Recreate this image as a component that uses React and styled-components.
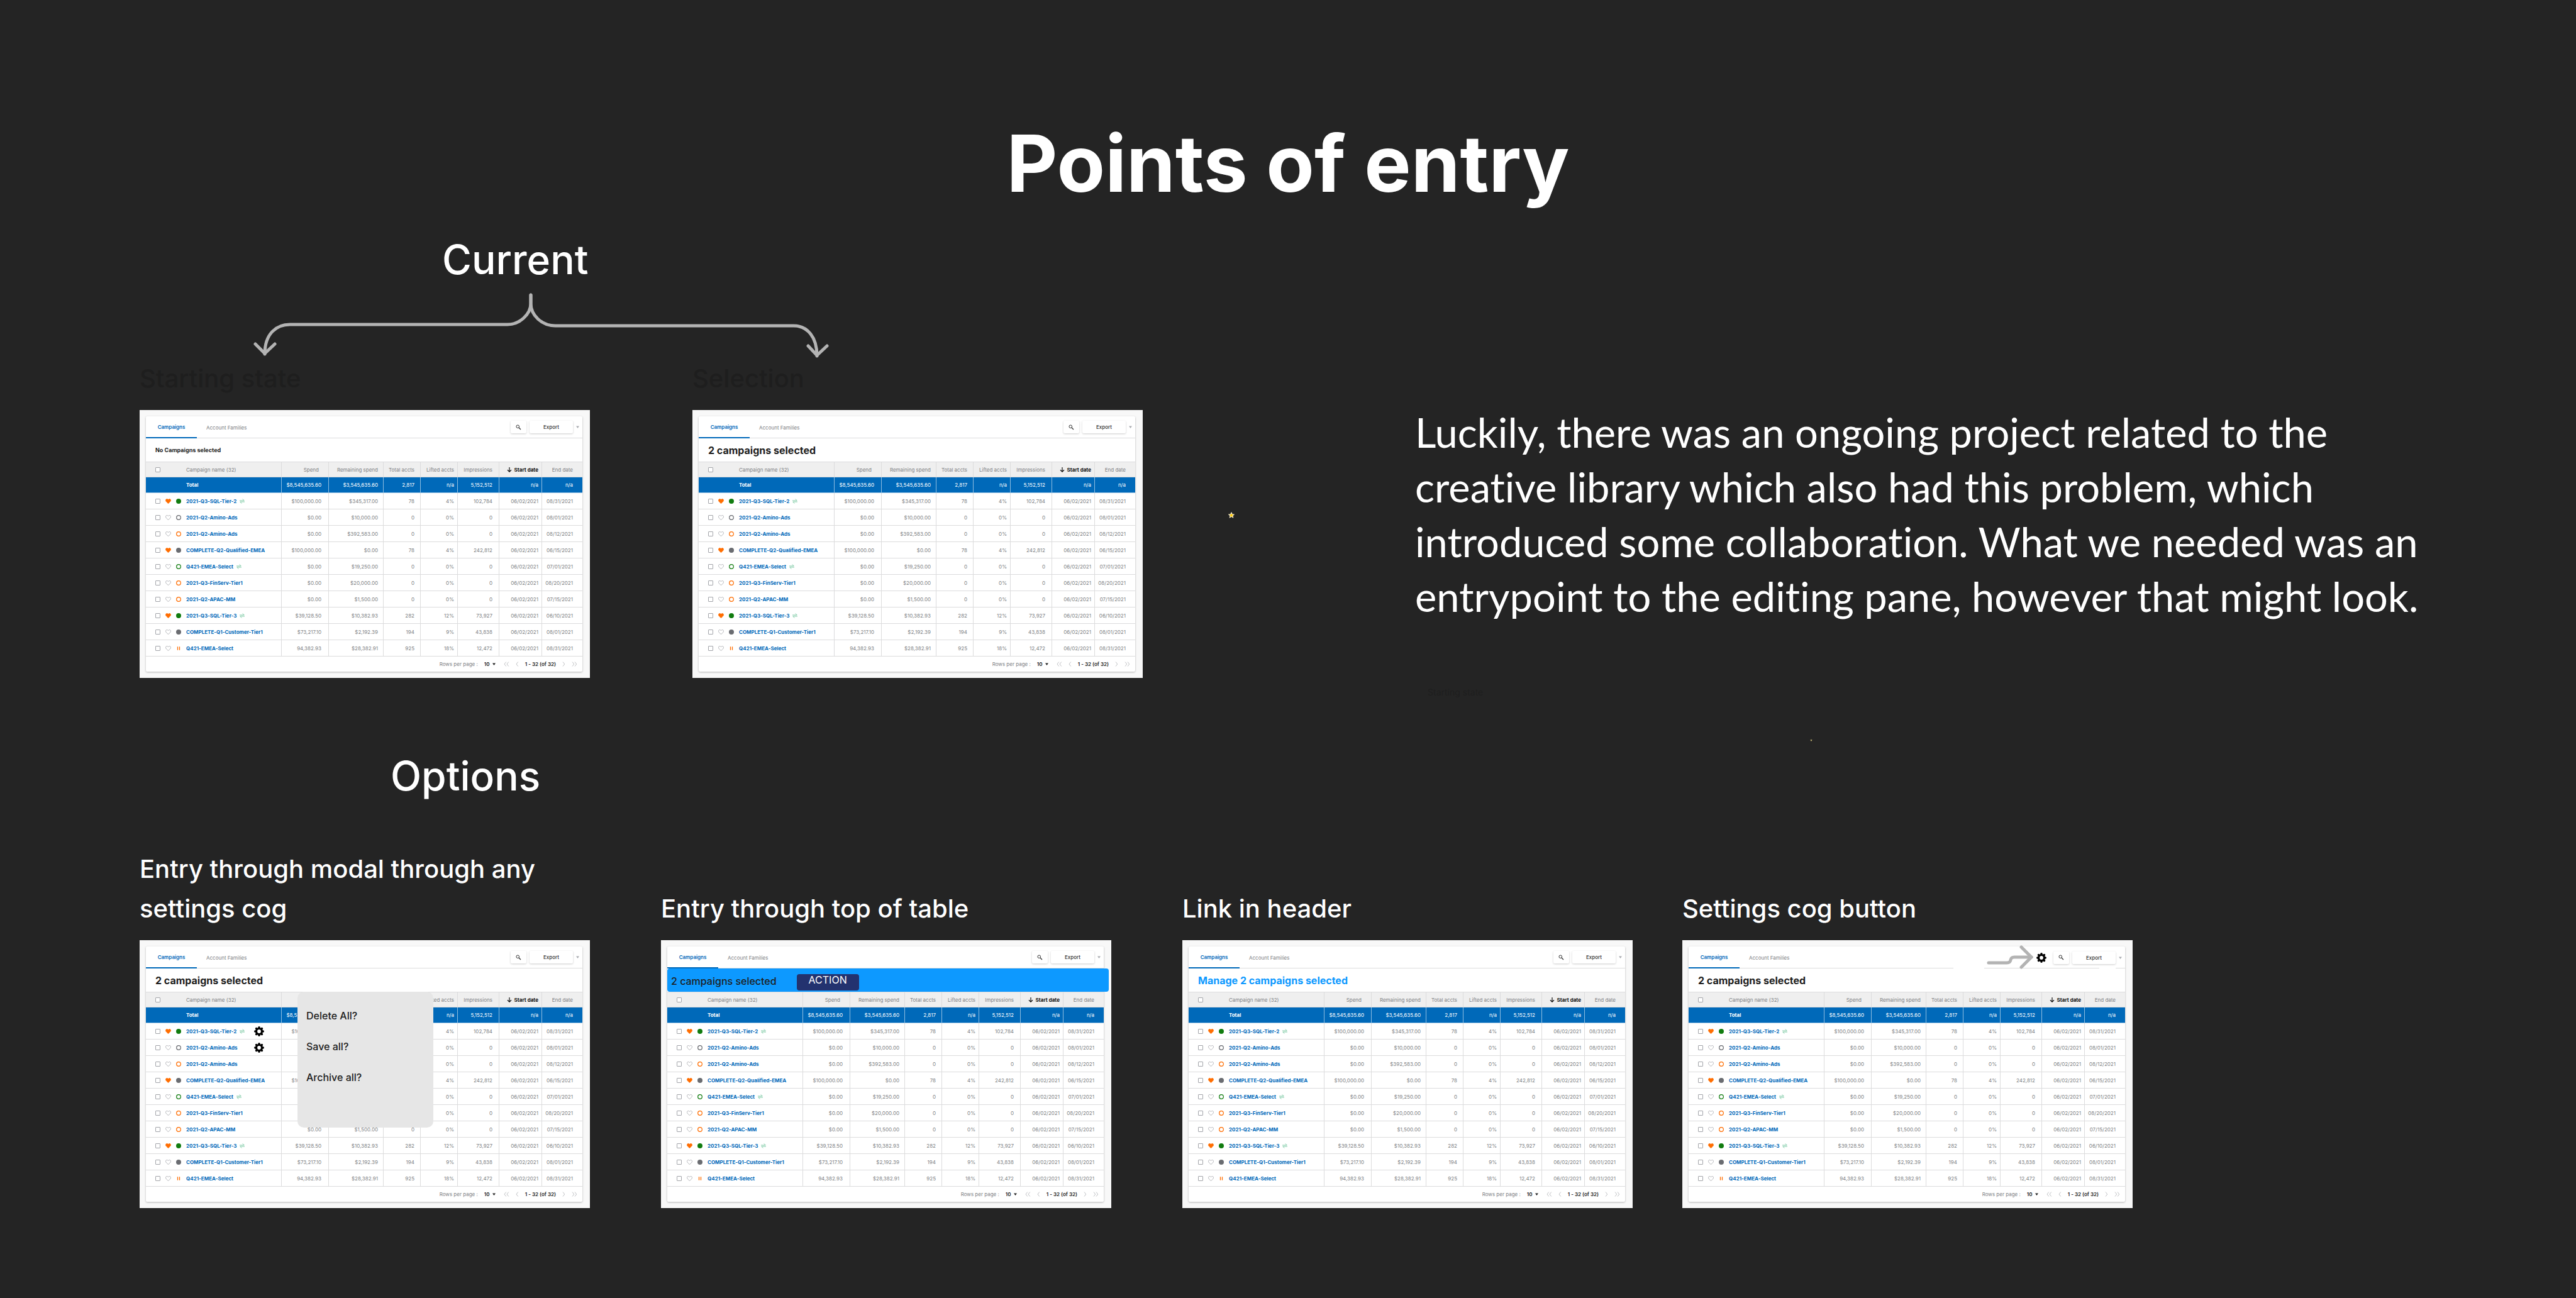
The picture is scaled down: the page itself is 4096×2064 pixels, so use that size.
import React, { useId } from 'react';
import styled, { createGlobalStyle, css } from 'styled-components';

const color = {
  page: '#242424',
  ghost: '#1e1e1e',
  blue: '#0069b9',
  bright: '#0d99ff',
  navy: '#23326f',
  orange: '#ff6d00',
  green: '#117c0f',
  slate: '#6a6c71',
  text: '#808285',
  line: '#dcdcdd',
};

const GlobalStyle = createGlobalStyle`
  * { box-sizing: border-box; }
  html { background: ${color.page}; }
  body { margin: 0; font-family: Inter, "Liberation Sans", sans-serif; }
  h1, h2, h3, p, ul { margin: 0; padding: 0; }
  button, select, input { margin: 0; font-family: inherit; }
  svg { display: block; flex: none; }
`;

/* ---------- board ---------- */

const Page = styled.main`
  display: flex;
  flex-direction: column;
  min-height: 100vh;
  padding: 185px 0 140px 222px;
  background: ${color.page};
  color: #fff;
`;

const Title = styled.h1`
  margin-right: 222px;
  font-size: 125px;
  line-height: 150px;
  font-weight: 700;
  text-align: center;
`;

const Heading = styled.h2`
  padding-left: ${(p) => p.$indent}px;
  font-size: 64px;
  line-height: 78px;
  font-weight: 500;
`;

const CurrentSection = styled.section`
  display: grid;
  grid-template-columns: 1595fr 431fr 1848fr;
  margin-top: 39px;
`;

const CurrentPair = styled.div`
  display: grid;
  grid-template-columns: 879fr 716fr;
`;

const Connector = styled.svg`
  width: 100%;
  height: auto;
`;

const StarLane = styled.div`
  padding: 440px 0 0 136px;
`;

const Story = styled.div`
  display: flex;
  flex-direction: column;
  align-items: flex-start;
  padding: 270px 0 0 2px;
`;

const Paragraph = styled.p`
  max-width: 1620px;
  font-family: Lato, "Liberation Sans", sans-serif;
  font-size: 65px;
  line-height: 87px;
  font-variant-ligatures: none;
`;

const SmallGhost = styled.p`
  margin: 99px 0 64px 20px;
  color: ${color.ghost};
  font-size: 14px;
  line-height: 20px;
`;

const Speck = styled.div`
  padding-left: 628px;
`;

const OptionsSection = styled.section`
  display: flex;
  flex-direction: column;
  gap: 77px;
  margin-top: 16px;
`;

const OptionGrid = styled.div`
  display: grid;
  grid-template-columns: 829fr 829fr 795fr 1421fr;
  align-items: end;
`;

const Item = styled.article`
  display: flex;
  flex-direction: column;
  gap: 19px;
  max-width: 716px;
`;

const Caption = styled.h3`
  color: ${(p) => (p.$ghost ? color.ghost : '#fff')};
  font-size: 40px;
  line-height: 63px;
  font-weight: 500;
`;

/* ---------- campaign card ---------- */

const Card = styled.div`
  padding: 10px 12px 10px 10px;
  background: #f8f8f8;
  color: ${color.text};
  font-size: 8px;
  line-height: 10px;
`;

const Panel = styled.div`
  position: relative;
  background: #fff;
  border-radius: 2px;
  box-shadow: 0 1px 3px rgba(0, 0, 0, 0.28);
`;

const rule = (from, to) =>
  `linear-gradient(${color.line}, ${color.line}) ${from}px 100% / ${to - from}px 1px no-repeat`;

const Toolbar = styled.div`
  position: relative;
  display: flex;
  align-items: center;
  height: 35px;
  padding-right: 5px;
  ${(p) =>
    p.$broken
      ? css`background: ${rule(0, 421)}, ${rule(470, 653)}, ${rule(679, 694)};`
      : css`border-bottom: 1px solid ${color.line};`}
`;

const Tab = styled.button`
  align-self: stretch;
  margin-bottom: ${(p) => (p.$broken ? 0 : -1)}px;
  padding: 0 15px;
  border: 0;
  background: none;
  color: ${color.text};
  font-size: 8px;
  ${(p) =>
    p.$active &&
    css`
      width: 81px;
      border-bottom: 2px solid ${color.blue};
      color: ${color.blue};
      font-weight: 600;
    `}
`;

const Tools = styled.div`
  display: flex;
  align-items: center;
  gap: 5px;
  margin-left: auto;
`;

const ToolButton = styled.button`
  display: flex;
  align-items: center;
  justify-content: center;
  width: ${(p) => p.$width}px;
  height: 20px;
  padding: 0;
  border: 0;
  border-radius: 2px;
  background: #fff;
  box-shadow: 0 1px 3px rgba(0, 0, 0, 0.2);
  color: #333;
  font-size: 8px;
  font-weight: 500;
`;

const CogButton = styled.button`
  margin: 0 ${(p) => p.$after}px 0 auto;
  padding: 0;
  border: 0;
  background: none;
`;

const PointerArrow = styled.svg`
  position: absolute;
  top: -2px;
  right: 146px;
`;

const Strip = styled.div`
  display: flex;
  align-items: center;
  height: 37px;
  padding-left: 15px;
  color: #1e1e1e;
  font-size: ${(p) => (p.$small ? 9 : 16)}px;
  font-weight: 700;
`;

const StripLink = styled.a`
  color: ${color.bright};
  text-decoration: none;
`;

const ActionStrip = styled.div`
  position: relative;
  display: flex;
  align-items: flex-end;
  gap: 32px;
  height: 37px;
  margin-right: -8px;
  padding: 0 0 2px 6px;
  border-radius: 4px;
  background: ${color.bright};
  color: #1e1e1e;
  font-size: 16px;
  line-height: 29px;
  font-weight: 500;
`;

const ActionButton = styled.button`
  width: 99px;
  height: 26px;
  padding: 0 0 7px;
  border: 0;
  border-radius: 4px;
  background: ${color.navy};
  color: #fff;
  font-size: 16px;
  line-height: 19px;
`;

const Table = styled.table`
  width: 100%;
  table-layout: fixed;
  border-collapse: separate;
  border-spacing: 0;
  white-space: nowrap;
`;

const Row = styled.tr`
  height: ${(p) => (p.$compact ? 25 : 26)}px;
`;

const cell = css`
  padding: 0 ${(p) => p.$pad || 0}px 0 0;
  border-bottom: 1px solid ${color.line};
  border-right: 1px solid ${color.line};
  text-align: right;
  font-weight: 400;
  &:last-child { border-right: 0; }
`;

const HeadCell = styled.th`
  ${cell}
  border-top: 1px solid ${color.line};
  background: #efefef;
  ${(p) => p.$sorted && css`color: #111; font-weight: 700;`}
`;

const Cell = styled.td`
  ${cell}
`;

const TotalCell = styled.td`
  ${cell}
  background: ${color.blue};
  border-right-color: #8fbde0;
  border-bottom-color: #8fbde0;
  color: #fff;
`;

const NameLine = styled.div`
  display: flex;
  align-items: center;
  gap: 8px;
  padding-left: ${(p) => (p.$inset ? 64 : 15)}px;
  text-align: left;
  font-weight: ${(p) => (p.$inset ? 700 : 400)};
`;

const HeadName = styled.span`
  margin-left: 33px;
`;

const CampaignLink = styled.a`
  display: flex;
  align-items: center;
  gap: 5px;
  color: ${color.blue};
  font-weight: 700;
  text-decoration: none;
`;

const Sorted = styled.span`
  display: flex;
  align-items: center;
  justify-content: flex-end;
  gap: 4px;
`;

const Check = styled.input`
  appearance: none;
  flex: none;
  width: 8px;
  height: 8px;
  border: 1px solid #a3a5aa;
  border-radius: 1px;
  background: #fff;
`;

const Footer = styled.div`
  display: flex;
  align-items: center;
  justify-content: flex-end;
  gap: 10px;
  height: 24px;
  padding-right: 8px;
`;

const PageSize = styled.span`
  display: flex;
  align-items: center;
  gap: 2px;
  margin-right: 3px;
`;

const PageSelect = styled.select`
  appearance: none;
  width: 11px;
  padding: 0;
  border: 0;
  background: none;
  color: #222;
  font-size: 8px;
  font-weight: 600;
`;

const PagerButton = styled.button`
  padding: 0;
  border: 0;
  background: none;
`;

const Range = styled.strong`
  color: #222;
  font-weight: 600;
`;

const Menu = styled.ul`
  position: absolute;
  top: 72px;
  left: 241px;
  width: 216px;
  height: 216px;
  padding: 14px 0 0 14px;
  border-radius: 10px;
  background: #e6e6e6;
  list-style: none;
`;

const MenuButton = styled.button`
  display: block;
  padding: 0;
  border: 0;
  background: none;
  color: #1e1e1e;
  font-size: 16px;
  line-height: 49px;
  font-weight: 500;
`;

/* ---------- drawings ---------- */

const Heart = ({ on }) => (
  <svg width="9" height="8" viewBox="0 0 18 16">
    <path
      d="M9 15 C4 11.2 1 8.4 1 5.2 C1 2.8 2.8 1 5 1 C6.8 1 8.2 2 9 3.4 C9.8 2 11.2 1 13 1 C15.2 1 17 2.8 17 5.2 C17 8.4 14 11.2 9 15 Z"
      fill={on ? color.orange : 'none'}
      stroke={on ? color.orange : '#a3a5aa'}
      strokeWidth="1.6"
    />
  </svg>
);

const Status = ({ kind }) => {
  const [tone, shape] = kind.split('-');
  const c = color[tone];
  return (
    <svg width="8" height="8" viewBox="0 0 16 16">
      {shape === 'dot' && <circle cx="8" cy="8" r="8" fill={c} />}
      {shape === 'ring' && <circle cx="8" cy="8" r="6.7" fill="none" stroke={c} strokeWidth="2.4" />}
      {shape === 'pause' && <path d="M5 2.5V13.5M11 2.5V13.5" stroke={c} strokeWidth="2.6" />}
    </svg>
  );
};

const Swap = () => (
  <svg width="8" height="8" viewBox="0 0 16 16" fill="none" stroke="#6fc49b" strokeWidth="1.8">
    <path d="M0 6H14.5L9.5 1M16 10H1.5L6.5 15" />
  </svg>
);

const Cog = () => (
  <svg width="16" height="16" viewBox="0 0 20 20">
    <g stroke="#000" strokeWidth="4.4" strokeLinecap="round">
      <path d="M10 2.2V17.8M2.2 10H17.8M4.5 4.5L15.5 15.5M15.5 4.5L4.5 15.5" />
    </g>
    <circle cx="10" cy="10" r="7.6" fill="#000" />
    <circle cx="10" cy="10" r="3.6" fill="#fff" />
  </svg>
);

const Caret = ({ tone }) => (
  <svg width="5" height="4" viewBox="0 0 10 8">
    <path d="M0 1H10L5 8Z" fill={tone} />
  </svg>
);

const Chevron = ({ twice, right }) => (
  <svg
    width={twice ? 9 : 5}
    height="8"
    viewBox={twice ? '0 0 18 16' : '0 0 10 16'}
    fill="none"
    stroke="#b9babd"
    strokeWidth="1.8"
  >
    {right ? <path d="M2 1L7.5 8L2 15" /> : <path d="M7.5 1L2 8L7.5 15" />}
    {twice && (right ? <path d="M10 1L15.5 8L10 15" /> : <path d="M15.5 1L10 8L15.5 15" />)}
  </svg>
);

const Star = ({ size, tone, edge }) => (
  <svg width={size} height={size} viewBox="0 0 24 24">
    <path
      d="M12 2L15 9L22.5 9.5L16.8 14.4L18.6 21.8L12 17.8L5.4 21.8L7.2 14.4L1.5 9.5L9 9Z"
      fill={tone}
      stroke={edge}
      strokeWidth="2.5"
      strokeLinejoin="round"
    />
  </svg>
);

const BranchArrows = () => (
  <Connector viewBox="0 0 1595 118" fill="none" stroke="#b3b3b3" strokeWidth="5" strokeLinecap="round">
    <path d="M622 17V30C622 48 604 64 585 64H239C218 64 199 78 199 111" />
    <path d="M622 17V30C622 50 640 66 661 66H1040C1062 66 1077 84 1077 114" />
    <path d="M184 95L199 110L215 95M1063 98L1077 113L1093 98" strokeLinejoin="miter" />
  </Connector>
);

/* ---------- data ---------- */

const columns = [
  { label: 'Spend', width: 75, pad: 11, headPad: 15 },
  { label: 'Remaining spend', width: 87, pad: 8 },
  { label: 'Total accts', width: 59, pad: 9 },
  { label: 'Lifted accts', width: 59, pad: 5 },
  { label: 'Impressions', width: 66, pad: 10 },
  { label: 'Start date', width: 68, pad: 5, sorted: true },
  { label: 'End date', width: 64, pad: 15 },
];

const totals = ['$8,545,635.60', '$3,545,635.60', '2,817', 'n/a', '5,152,512', 'n/a', 'n/a'];

const campaigns = [
  ['2021-Q3-SQL-Tier-2', true, 'green-dot', true, ['$100,000.00', '$345,317.00', '78', '4%', '102,784', '06/02/2021', '08/31/2021']],
  ['2021-Q2-Amino-Ads', false, 'slate-ring', false, ['$0.00', '$10,000.00', '0', '0%', '0', '06/02/2021', '08/01/2021']],
  ['2021-Q2-Amino-Ads', false, 'orange-ring', false, ['$0.00', '$392,583.00', '0', '0%', '0', '06/02/2021', '08/12/2021']],
  ['COMPLETE-Q2-Qualified-EMEA', true, 'slate-dot', false, ['$100,000.00', '$0.00', '78', '4%', '242,812', '06/02/2021', '06/15/2021']],
  ['Q421-EMEA-Select', false, 'green-ring', true, ['$0.00', '$19,250.00', '0', '0%', '0', '06/02/2021', '07/01/2021']],
  ['2021-Q3-FinServ-Tier1', false, 'orange-ring', false, ['$0.00', '$20,000.00', '0', '0%', '0', '06/02/2021', '08/20/2021']],
  ['2021-Q2-APAC-MM', false, 'orange-ring', false, ['$0.00', '$1,500.00', '0', '0%', '0', '06/02/2021', '07/15/2021']],
  ['2021-Q3-SQL-Tier-3', true, 'green-dot', true, ['$39,128.50', '$10,382.93', '282', '12%', '73,927', '06/02/2021', '06/10/2021']],
  ['COMPLETE-Q1-Customer-Tier1', false, 'slate-dot', false, ['$73,217.10', '$2,192.39', '194', '9%', '43,838', '06/02/2021', '08/01/2021']],
  ['Q421-EMEA-Select', false, 'orange-pause', false, ['94,382.93', '$28,382.91', '925', '18%', '12,472', '06/02/2021', '08/31/2021']],
];

/* ---------- parts ---------- */

function CampaignTable({ rowCogs }) {
  return (
    <Table>
      <colgroup>
        <col />
        {columns.map((c) => (
          <col key={c.label} width={c.width} />
        ))}
      </colgroup>
      <thead>
        <Row $compact>
          <HeadCell scope="col">
            <NameLine>
              <Check type="checkbox" aria-label="Select all campaigns" />
              <HeadName>Campaign name (32)</HeadName>
            </NameLine>
          </HeadCell>
          {columns.map((c) => (
            <HeadCell key={c.label} scope="col" $pad={c.headPad || c.pad} $sorted={c.sorted}>
              {c.sorted ? (
                <Sorted>
                  <svg width="8" height="8" viewBox="0 0 16 16" fill="none" stroke="#111" strokeWidth="2.4">
                    <path d="M8 0V14M2 8.5L8 14.5L14 8.5" />
                  </svg>
                  {c.label}
                </Sorted>
              ) : (
                c.label
              )}
            </HeadCell>
          ))}
        </Row>
      </thead>
      <tbody>
        <Row $compact>
          <TotalCell>
            <NameLine $inset>Total</NameLine>
          </TotalCell>
          {totals.map((t, i) => (
            <TotalCell key={i} $pad={columns[i].pad}>{t}</TotalCell>
          ))}
        </Row>
        {campaigns.map(([name, loved, status, shared, values], r) => (
          <Row key={r}>
            <Cell>
              <NameLine>
                <Check type="checkbox" aria-label={`Select ${name}`} />
                <Heart on={loved} />
                <Status kind={status} />
                <CampaignLink href="#campaign">
                  {name}
                  {shared && <Swap />}
                </CampaignLink>
                {rowCogs && r < 2 && (
                  <CogButton $after={27} aria-label={`Settings for ${name}`}>
                    <Cog />
                  </CogButton>
                )}
              </NameLine>
            </Cell>
            {values.map((v, i) => (
              <Cell key={i} $pad={columns[i].pad}>{v}</Cell>
            ))}
          </Row>
        ))}
      </tbody>
    </Table>
  );
}

function CampaignCard({ strip, rowCogs, menu, headerCog }) {
  const sizeId = useId();
  return (
    <Card>
      <Panel>
        <Toolbar $broken={headerCog}>
          <Tab $active $broken={headerCog}>Campaigns</Tab>
          <Tab>Account Families</Tab>
          <Tools>
            {headerCog && (
              <CogButton $after={6} aria-label="Settings">
                <Cog />
              </CogButton>
            )}
            <ToolButton $width={25} aria-label="Search">
              <svg width="9" height="9" viewBox="0 0 18 18" fill="none" stroke="#333">
                <circle cx="6.5" cy="6.5" r="4.6" strokeWidth="2" />
                <path d="M10 10L16 16" strokeWidth="2.6" />
              </svg>
            </ToolButton>
            <ToolButton $width={69}>Export</ToolButton>
            <Caret tone="#a9abb0" />
          </Tools>
          {headerCog && (
            <PointerArrow width="74" height="38" viewBox="0 0 74 38" fill="none" stroke="#b3b3b3" strokeWidth="5" strokeLinecap="round">
              <path d="M3 28H32C42 28 34 19 44 19H71" />
              <path d="M55 3L71 19L55 35" strokeLinejoin="miter" />
            </PointerArrow>
          )}
        </Toolbar>
        {strip}
        <CampaignTable rowCogs={rowCogs} />
        <Footer>
          <label htmlFor={sizeId}>Rows per page :</label>
          <PageSize>
            <PageSelect id={sizeId} defaultValue="10">
              <option>10</option>
            </PageSelect>
            <Caret tone="#222" />
          </PageSize>
          <PagerButton aria-label="First page"><Chevron twice /></PagerButton>
          <PagerButton aria-label="Previous page"><Chevron /></PagerButton>
          <Range>1 - 32 (of 32)</Range>
          <PagerButton aria-label="Next page"><Chevron right /></PagerButton>
          <PagerButton aria-label="Last page"><Chevron twice right /></PagerButton>
        </Footer>
        {menu && (
          <Menu>
            {menu.map((m) => (
              <li key={m}>
                <MenuButton>{m}</MenuButton>
              </li>
            ))}
          </Menu>
        )}
      </Panel>
    </Card>
  );
}

const selected = <Strip>2 campaigns selected</Strip>;

export default function App() {
  return (
    <>
      <GlobalStyle />
      <Page>
        <Title>Points of entry</Title>

        <CurrentSection>
          <div>
            <Heading $indent={481}>Current</Heading>
            <BranchArrows />
            <CurrentPair>
              <Item>
                <Caption $ghost>Starting state</Caption>
                <CampaignCard strip={<Strip $small>No Campaigns selected</Strip>} />
              </Item>
              <Item>
                <Caption $ghost>Selection</Caption>
                <CampaignCard strip={selected} />
              </Item>
            </CurrentPair>
          </div>
          <StarLane>
            <Star size={10} tone="#ffc800" edge="#f4ecd0" />
          </StarLane>
          <Story>
            <Paragraph>
              Luckily, there was an ongoing project related to the creative library which also had this
              problem, which introduced some collaboration. What we needed was an entrypoint to the
              editing pane, however that might look.
            </Paragraph>
            <SmallGhost>Starting state</SmallGhost>
            <Speck>
              <Star size={4} tone="#c9bb78" edge="none" />
            </Speck>
          </Story>
        </CurrentSection>

        <OptionsSection>
          <Heading $indent={399}>Options</Heading>
          <OptionGrid>
            <Item>
              <Caption>Entry through modal through any settings cog</Caption>
              <CampaignCard strip={selected} rowCogs menu={['Delete All?', 'Save all?', 'Archive all?']} />
            </Item>
            <Item>
              <Caption>Entry through top of table</Caption>
              <CampaignCard
                strip={
                  <ActionStrip>
                    2 campaigns selected
                    <ActionButton>ACTION</ActionButton>
                  </ActionStrip>
                }
              />
            </Item>
            <Item>
              <Caption>Link in header</Caption>
              <CampaignCard
                strip={
                  <Strip>
                    <StripLink href="#manage">Manage 2 campaigns selected</StripLink>
                  </Strip>
                }
              />
            </Item>
            <Item>
              <Caption>Settings cog button</Caption>
              <CampaignCard strip={selected} headerCog />
            </Item>
          </OptionGrid>
        </OptionsSection>
      </Page>
    </>
  );
}
